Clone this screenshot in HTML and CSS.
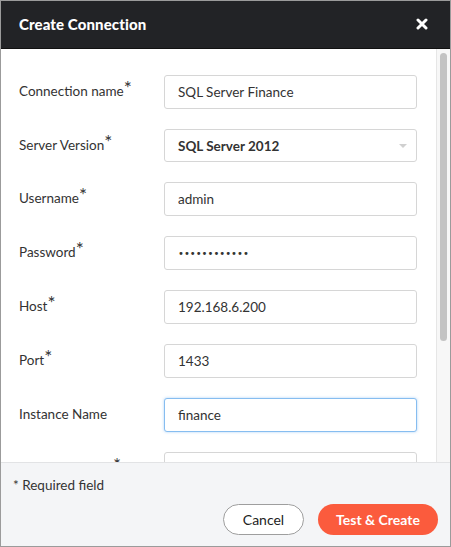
FILE: index.html
```html
<!DOCTYPE html>
<html>
<head>
<meta charset="utf-8">
<link rel="stylesheet" href="styles.css">
</head>
<body>
<div class="dialog">
  <div class="header">
    <span class="title">Create Connection</span>
    <svg class="close" width="12" height="12" viewBox="0 0 12 12" aria-label="Close">
      <path d="M2 2 L10 10 M10 2 L2 10" stroke="#fff" stroke-width="3" stroke-linecap="round"/>
    </svg>
  </div>
  <div class="content">
    <form class="form">
      <div class="row"><label class="label">Connection name<span class="req">*</span></label><input class="field" type="text" value="SQL Server Finance" readonly></div>
      <div class="row"><label class="label">Server Version<span class="req">*</span></label><div class="field select"><span>SQL Server 2012</span><span class="caret"></span></div></div>
      <div class="row"><label class="label">Username<span class="req">*</span></label><input class="field" type="text" value="admin" readonly></div>
      <div class="row"><label class="label">Password<span class="req">*</span></label><div class="field dots">••••••••••••</div></div>
      <div class="row"><label class="label">Host<span class="req">*</span></label><input class="field" type="text" value="192.168.6.200" readonly></div>
      <div class="row"><label class="label">Port<span class="req">*</span></label><input class="field" type="text" value="1433" readonly></div>
      <div class="row"><label class="label">Instance Name</label><input class="field focus" type="text" value="finance" readonly></div>
      <div class="row"><label class="label">Database Name<span class="req">*</span></label><input class="field" type="text" value="" readonly></div>
    </form>
    <div class="scrollbar"><div class="thumb"></div></div>
  </div>
  <div class="footer">
    <div class="note">* Required field</div>
    <div class="actions">
      <button class="btn cancel" type="button">Cancel</button>
      <button class="btn primary" type="button">Test &amp; Create</button>
    </div>
  </div>
</div>
</body>
</html>
```
FILE: styles.css
```css
html, body {
  margin: 0;
  padding: 0;
  background: #ffffff;
}
body {
  font-family: Lato, "Open Sans", Arial, sans-serif;
  color: #333;
}
.dialog {
  width: 451px;
  height: 547px;
  box-sizing: border-box;
  border: 1px solid #9b9b9b;
  display: flex;
  flex-direction: column;
  overflow: hidden;
}
.header {
  height: 47px;
  flex: none;
  background: #222326;
  border-top: 1px solid #3b3c3f;
  margin: -1px -1px 0 -1px;
  display: flex;
  align-items: center;
  justify-content: space-between;
  padding: 0 23px 0 19px;
  border-bottom: 1px solid #111;
}
.title {
  color: #fff;
  font-weight: 900;
  font-size: 15px;
  letter-spacing: 0.1px;
  position: relative;
  top: -1px;
}
.close {
  display: block;
  position: relative;
  top: -1px;
}
.content {
  flex: 1;
  position: relative;
  overflow: hidden;
}
.form {
  margin: 0;
  padding: 26px 0 0 18px;
  display: flex;
  flex-direction: column;
  gap: 20px;
}
.row {
  display: grid;
  grid-template-columns: 145px 253px;
  align-items: center;
}
.label {
  font-size: 13.5px;
  line-height: 16px;
  color: #333;
  position: relative;
  top: -1px;
}
.req {
  font-size: 19px;
  font-weight: 400;
  color: #333;
  position: relative;
  top: -1px;
  margin-left: 0;
  line-height: 0;
}
.field {
  box-sizing: border-box;
  height: 34px;
  width: 253px;
  border: 1px solid #d6d6d6;
  border-radius: 3px;
  background: #fff;
  padding: 0 13px;
  font-family: Lato, "Open Sans", Arial, sans-serif;
  font-size: 13.5px;
  color: #333;
  outline: none;
  margin: 0;
}
.select {
  display: flex;
  align-items: center;
  justify-content: space-between;
  font-weight: 700;
  height: 33px;
  padding-right: 9px;
}
.caret {
  width: 0;
  height: 0;
  border-left: 4px solid transparent;
  border-right: 4px solid transparent;
  border-top: 4px solid #d0d0d0;
}
.dots {
  display: flex;
  align-items: center;
  font-size: 10px;
  letter-spacing: 0;
  font-family: "DejaVu Sans", sans-serif;
}
.focus {
  border-color: #86bdf0;
  box-shadow: 0 0 3px rgba(120, 180, 240, 0.6);
}
.scrollbar {
  position: absolute;
  top: 0;
  right: 0;
  bottom: 0;
  width: 13px;
  background: #f7f7f7;
  border-left: 1px solid #e6e6e6;
}
.thumb {
  position: absolute;
  top: 4px;
  left: 3px;
  width: 7px;
  height: 288px;
  border-radius: 4px;
  background: #c3c3c3;
}
.footer {
  flex: none;
  height: 84px;
  box-sizing: border-box;
  background: #f4f5f7;
  border-top: 1px solid #e2e3e5;
  padding: 13px 12px 0 12px;
  display: flex;
  flex-direction: column;
  position: relative;
  z-index: 1;
}
.note {
  font-size: 13.5px;
  color: #333;
  line-height: 18px;
}
.actions {
  display: flex;
  justify-content: flex-end;
  gap: 14px;
  margin-top: 10px;
}
.btn {
  height: 31px;
  border-radius: 16px;
  font-family: Lato, "Open Sans", Arial, sans-serif;
  font-size: 14px;
  cursor: pointer;
  padding: 0;
}
.cancel {
  width: 81px;
  background: #fff;
  border: 1px solid #9e9e9e;
  color: #222;
}
.primary {
  width: 120px;
  background: #fb5b3d;
  border: none;
  color: #fff;
  font-weight: 700;
}
```
